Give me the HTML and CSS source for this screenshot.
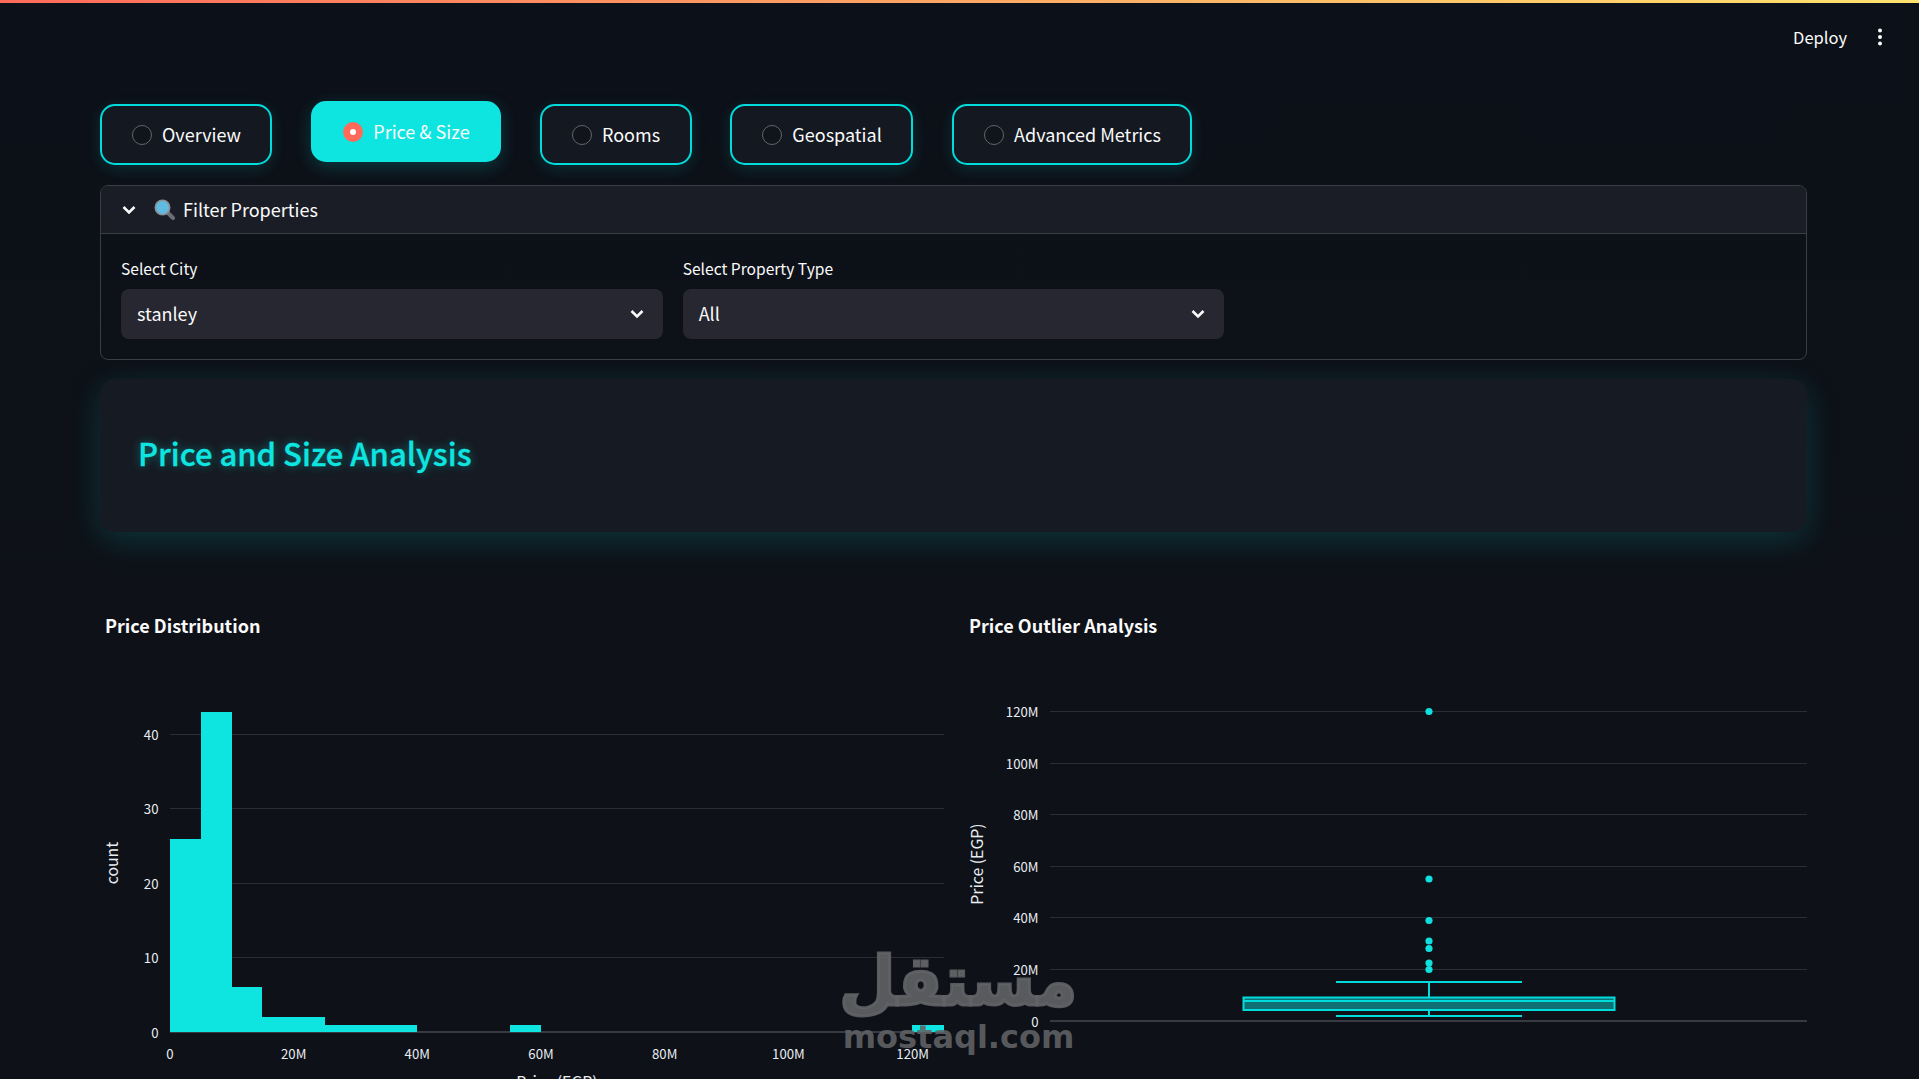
FILE: index.html
```html
<!DOCTYPE html>
<html lang="en">
<head>
<meta charset="utf-8">
<title>Price and Size Analysis</title>
<link rel="stylesheet" href="styles.css">
</head>
<body>
<div class="stripe"></div>
<header class="topbar">
  <span class="deploy">Deploy</span>
  <svg class="kebab" width="6" height="18" viewBox="0 0 6 18"><circle cx="3" cy="2.5" r="2"/><circle cx="3" cy="9" r="2"/><circle cx="3" cy="15.5" r="2"/></svg>
</header>
<main class="main">
  <nav class="tabs">
    <div class="tab"><span class="radio"></span><span class="lbl">Overview</span></div>
    <div class="tab tab-active"><span class="radio radio-on"></span><span class="lbl">Price &amp; Size</span></div>
    <div class="tab"><span class="radio"></span><span class="lbl">Rooms</span></div>
    <div class="tab"><span class="radio"></span><span class="lbl">Geospatial</span></div>
    <div class="tab"><span class="radio"></span><span class="lbl">Advanced Metrics</span></div>
  </nav>

  <section class="expander">
    <div class="exp-head">
      <svg class="chev-head" width="16" height="16" viewBox="0 0 16 16"><polyline points="2.5,5 8,10.5 13.5,5"/></svg>
      <svg class="lens" width="21" height="21" viewBox="0 0 21 21">
        <line x1="13" y1="13" x2="19" y2="19" class="lens-handle"/>
        <circle cx="8.5" cy="8.5" r="7.2" class="lens-glass"/>
      </svg>
      <span class="lbl">Filter Properties</span>
    </div>
    <div class="exp-body">
      <div class="field">
        <label class="field-label">Select City</label>
        <div class="select"><span class="lbl">stanley</span><svg class="chev" width="16" height="16" viewBox="0 0 16 16"><polyline points="2.5,5 8,10.5 13.5,5"/></svg></div>
      </div>
      <div class="field">
        <label class="field-label">Select Property Type</label>
        <div class="select"><span class="lbl">All</span><svg class="chev" width="16" height="16" viewBox="0 0 16 16"><polyline points="2.5,5 8,10.5 13.5,5"/></svg></div>
      </div>
    </div>
  </section>

  <section class="card"><h2 class="card-title">Price and Size Analysis</h2></section>

  <section class="charts">
    <div class="chart">
      <h3 class="chart-title">Price Distribution</h3>
      <svg class="plot" width="844" height="440" viewBox="100 650 844 440">
        <g class="grid">
          <line x1="170" x2="944" y1="734.5" y2="734.5"/>
          <line x1="170" x2="944" y1="808.5" y2="808.5"/>
          <line x1="170" x2="944" y1="883.5" y2="883.5"/>
          <line x1="170" x2="944" y1="957.5" y2="957.5"/>
          <line class="zero" x1="170" x2="944" y1="1032" y2="1032"/>
        </g>
        <g class="bars">
          <rect x="170" y="839" width="31" height="193"/>
          <rect x="201" y="712" width="31" height="320"/>
          <rect x="232" y="987" width="30" height="45"/>
          <rect x="262" y="1017" width="63" height="15"/>
          <rect x="325" y="1025" width="92" height="7"/>
          <rect x="510" y="1025" width="31" height="7"/>
          <rect x="912" y="1025" width="32" height="7"/>
        </g>
        <g class="ticks ticks-y">
          <text x="158.5" y="739.5">40</text>
          <text x="158.5" y="814">30</text>
          <text x="158.5" y="889">20</text>
          <text x="158.5" y="963">10</text>
          <text x="158.5" y="1038">0</text>
        </g>
        <g class="ticks ticks-x">
          <text x="170" y="1059">0</text>
          <text x="293.7" y="1059">20M</text>
          <text x="417.3" y="1059">40M</text>
          <text x="541" y="1059">60M</text>
          <text x="664.7" y="1059">80M</text>
          <text x="788.4" y="1059">100M</text>
          <text x="912.7" y="1059">120M</text>
        </g>
        <text class="axis-title" x="557" y="1088">Price (EGP)</text>
        <text class="axis-title" x="118" y="863" transform="rotate(-90 118 863)">count</text>
      </svg>
    </div>
    <div class="chart">
      <h3 class="chart-title">Price Outlier Analysis</h3>
      <svg class="plot" width="843" height="440" viewBox="964 650 843 440">
        <g class="grid">
          <line x1="1050" x2="1807" y1="711.5" y2="711.5"/>
          <line x1="1050" x2="1807" y1="763.5" y2="763.5"/>
          <line x1="1050" x2="1807" y1="814.5" y2="814.5"/>
          <line x1="1050" x2="1807" y1="866.5" y2="866.5"/>
          <line x1="1050" x2="1807" y1="917.5" y2="917.5"/>
          <line x1="1050" x2="1807" y1="969.5" y2="969.5"/>
          <line class="zero" x1="1050" x2="1807" y1="1021" y2="1021"/>
        </g>
        <g class="ticks ticks-y">
          <text x="1038.5" y="717">120M</text>
          <text x="1038.5" y="769">100M</text>
          <text x="1038.5" y="820">80M</text>
          <text x="1038.5" y="872">60M</text>
          <text x="1038.5" y="923">40M</text>
          <text x="1038.5" y="975">20M</text>
          <text x="1038.5" y="1027">0</text>
        </g>
        <text class="axis-title" x="982.5" y="864" transform="rotate(-90 982.5 864)">Price (EGP)</text>
        <g class="box">
          <line x1="1429" x2="1429" y1="982" y2="997"/>
          <line x1="1429" x2="1429" y1="1010" y2="1016"/>
          <line x1="1336" x2="1522" y1="982" y2="982"/>
          <line x1="1336" x2="1522" y1="1016" y2="1016"/>
          <rect x="1243.5" y="997.5" width="371" height="12.5"/>
          <line x1="1243" x2="1615" y1="1001" y2="1001"/>
        </g>
        <g class="points">
          <circle cx="1429" cy="711.5" r="3.6"/>
          <circle cx="1429" cy="879" r="3.6"/>
          <circle cx="1429" cy="920.5" r="3.6"/>
          <circle cx="1429" cy="941" r="3.6"/>
          <circle cx="1429" cy="948.5" r="3.6"/>
          <circle cx="1429" cy="963" r="3.6"/>
          <circle cx="1429" cy="969.5" r="3.6"/>
        </g>
      </svg>
    </div>
  </section>
</main>
<div class="watermark">
  <div class="wm-ar" lang="ar" dir="rtl">مستقل</div>
  <div class="wm-en">mostaql.com</div>
</div>
</body>
</html>
```
FILE: styles.css
```css
* { box-sizing: border-box; }
html, body { margin: 0; height: 1079px; overflow: hidden; }
body {
  position: relative;
  background: linear-gradient(180deg, #0c1018 0%, #0e1118 60%, #0e1118 100%);
  color: #fafafa;
  font-family: "Noto Sans CJK SC", "Noto Sans", sans-serif;
}
.stripe { height: 3px; background: linear-gradient(90deg, #ff6b5b, #ffe36e); }
.topbar {
  display: flex; align-items: center; justify-content: flex-end;
  height: 68px; padding-right: 36px; gap: 30px;
}
.deploy { font-size: 16.5px; line-height: 24px; margin-bottom: 1px; }
.kebab { fill: #fafafa; }
.main { padding: 0 112px 0 100px; }
.lbl { margin-bottom: 2px; }

.tabs { display: flex; gap: 38.8px; padding-top: 33px; }
.tab {
  display: flex; align-items: center; gap: 10px;
  height: 61px; padding: 0 29.5px 0 30px;
  border: 2px solid #00dcdc; border-radius: 15px;
  background: #141821;
  font-size: 18px; line-height: 24px;
  box-shadow: 0 4px 15px rgba(0, 229, 229, .14);
}
.tab-active {
  transform: translateY(-3px);
  background: #0fe5e0; border-color: #0fe5e0;
  box-shadow: 0 5px 18px rgba(0, 229, 229, .2);
}
.radio {
  width: 20px; height: 20px; border-radius: 50%;
  border: 1px solid #62656c; background: #11141b;
}
.radio-on {
  border: 7px solid #ff6b5b; background: #fff;
}

.expander { margin-top: 20px; border: 1px solid #3a3d44; border-radius: 8px; overflow: hidden; }
.exp-head {
  display: flex; align-items: center; height: 48px; padding-left: 20px;
  background: #1a1d25; border-bottom: 1px solid #3a3d44;
  font-size: 18px; line-height: 24px;
}
.chev-head { margin-right: 17px; }
.chev-head polyline, .chev polyline { fill: none; stroke: #fafafa; stroke-width: 2.6; }
.lens { margin-right: 8px; }
.lens-handle { stroke: #6c6d75; stroke-width: 4; stroke-linecap: round; }
.lens-glass { fill: #5fbbe0; stroke: #8a9097; stroke-width: 1.6; }
.exp-body { display: grid; grid-template-columns: repeat(3, 1fr); gap: 20px; padding: 22px 20px 20px; }
.field-label { display: block; font-size: 15.6px; line-height: 24px; margin-bottom: 9px; }
.select {
  display: flex; align-items: center; justify-content: space-between;
  height: 50px; padding: 0 18px 0 16px;
  background: #262730; border-radius: 8px;
  font-size: 18px; line-height: 24px;
}

.card {
  display: flex; align-items: center;
  height: 153px; margin-top: 19px; padding: 0 38px 5px;
  background: #161a22; border-radius: 15px;
  box-shadow: 0 8px 32px rgba(0, 229, 229, .17);
}
.card-title {
  margin: 0; font-size: 31px; line-height: 44px; font-weight: 500; color: #0fe5e0;
  -webkit-text-stroke: .3px #0fe5e0;
  text-shadow: 0 0 10px rgba(0, 229, 229, .45);
}

.charts { display: grid; grid-template-columns: 844px 843px; gap: 20px; margin-top: 79px; }
.chart-title { margin: 0 0 10px; padding-left: 5px; font-size: 18px; line-height: 29px; font-weight: 700; }
.plot { display: block; }
.grid line { stroke: #2b2d35; stroke-width: 1; }
.grid .zero { stroke: #383a43; stroke-width: 2; }
.bars rect { fill: #0fe5e0; }
.ticks text { font-size: 13.2px; fill: #e8edf2; }
.ticks-y text { text-anchor: end; }
.ticks-x text { text-anchor: middle; }
.axis-title { font-size: 15.8px; fill: #e8edf2; text-anchor: middle; }
.box line { stroke: #00dcdc; stroke-width: 2; }
.box rect { fill: rgba(15, 229, 224, .45); stroke: #00dcdc; stroke-width: 2; }
.points circle { fill: #0fe0de; }

.watermark {
  position: absolute; left: 844px; top: 942px; width: 229px;
  display: flex; flex-direction: column; align-items: center;
  color: rgba(98, 99, 102, .9); pointer-events: none;
}
.wm-ar {
  font-family: "DejaVu Sans", sans-serif; font-weight: 700;
  font-size: 69px; line-height: 78px; height: 75px;
  -webkit-text-stroke: 3px rgba(98, 99, 102, .9);
  white-space: nowrap;
  transform: scaleX(.945);
}
.wm-en {
  font-family: "DejaVu Sans", sans-serif; font-weight: 700;
  font-size: 32px; line-height: 40px; white-space: nowrap;
}
```
